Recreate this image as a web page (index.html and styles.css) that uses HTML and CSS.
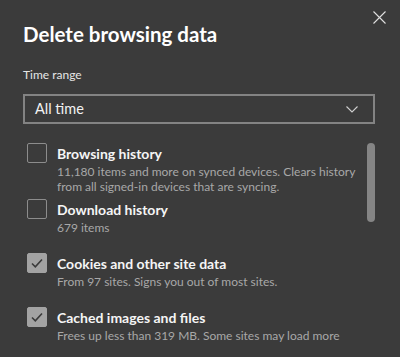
FILE: index.html
```html
<!DOCTYPE html>
<html lang="en">
<head>
    <meta charset="UTF-8">
    <meta name="viewport" content="width=device-width, initial-scale=1.0">
    <title>Delete browsing data</title>
    <link rel="stylesheet" href="styles.css">
</head>
<body>
    <div class="dialog">
        <!-- Header -->
        <div class="dialog-header">
            <h1>Delete browsing data</h1>
            <button class="close-btn" aria-label="Close">
                <svg width="13" height="13" viewBox="0 0 13 13">
                    <path d="M0.5 0.5 L12.5 12.5 M12.5 0.5 L0.5 12.5" stroke="#e0e0e0" stroke-width="1.1" fill="none"/>
                </svg>
            </button>
        </div>

        <!-- Time range -->
        <label class="field-label" for="timeRange">Time range</label>
        <div class="select-box" id="timeRange">
            <span>All time</span>
            <svg width="12" height="7" viewBox="0 0 12 7">
                <path d="M0.5 0.5 L6 6 L11.5 0.5" stroke="#d0d0d0" stroke-width="1.1" fill="none"/>
            </svg>
        </div>

        <!-- Data types -->
        <div class="option-area">
            <div class="option-list">
                <div class="option">
                    <span class="checkbox"></span>
                    <div class="option-text">
                        <div class="option-title">Browsing history</div>
                        <div class="option-desc">11,180 items and more on synced devices. Clears history from all signed-in devices that are syncing.</div>
                    </div>
                </div>
                <div class="option">
                    <span class="checkbox"></span>
                    <div class="option-text">
                        <div class="option-title">Download history</div>
                        <div class="option-desc">679 items</div>
                    </div>
                </div>
                <div class="option">
                    <span class="checkbox checked">
                        <svg width="20" height="20" viewBox="0 0 20 20">
                            <path d="M5 10.5 L8.3 13.8 L15 6.5" stroke="#3a3a3a" stroke-width="1.6" fill="none"/>
                        </svg>
                    </span>
                    <div class="option-text">
                        <div class="option-title">Cookies and other site data</div>
                        <div class="option-desc">From 97 sites. Signs you out of most sites.</div>
                    </div>
                </div>
                <div class="option">
                    <span class="checkbox checked">
                        <svg width="20" height="20" viewBox="0 0 20 20">
                            <path d="M5 10.5 L8.3 13.8 L15 6.5" stroke="#3a3a3a" stroke-width="1.6" fill="none"/>
                        </svg>
                    </span>
                    <div class="option-text">
                        <div class="option-title">Cached images and files</div>
                        <div class="option-desc">Frees up less than 319 MB. Some sites may load more</div>
                    </div>
                </div>
            </div>
            <div class="scroll-thumb"></div>
        </div>
    </div>
</body>
</html>
```

FILE: styles.css
```css
/* Dialog styles */
body {
    font-family: 'Lato', 'Noto Sans', sans-serif;
    background-color: #3b3b3b;
    margin: 0;
    padding: 0;
    color: #fff;
    height: 357px;
    overflow: hidden;
}

.dialog {
    padding: 11px 25px 0 23px;
}

.dialog-header {
    display: flex;
    justify-content: space-between;
    align-items: flex-start;
}

h1 {
    font-size: 20.5px;
    font-weight: 700;
    line-height: 28px;
    margin: 9px 0 0 0;
    color: #fff;
}

.close-btn {
    background: none;
    border: none;
    padding: 0;
    margin-right: -11px;
    width: 13px;
    height: 13px;
    display: flex;
}

.field-label {
    display: block;
    font-size: 12px;
    line-height: 16px;
    margin-top: 19px;
    color: #e6e6e6;
}

.select-box {
    margin-top: 11px;
    height: 26px;
    border: 2px solid #838383;
    display: flex;
    align-items: center;
    justify-content: space-between;
    padding: 0 15px 0 10px;
    font-size: 14.5px;
    line-height: 26px;
    color: #f2f2f2;
}

.option-area {
    display: flex;
    margin-top: 19px;
}

.option-list {
    flex: 1;
}

.option {
    display: flex;
    align-items: flex-start;
    min-height: 49px;
    padding-bottom: 5px;
}

.checkbox {
    flex: none;
    width: 18px;
    height: 18px;
    border: 1px solid #8c8c8c;
    border-radius: 2px;
    margin: 0 10px 0 4px;
    display: flex;
}

.checkbox.checked {
    background-color: #a3a3a3;
    border-color: #a3a3a3;
}

.checkbox svg {
    margin: -1px;
}

.option-title {
    font-size: 14px;
    font-weight: 700;
    line-height: 21px;
    color: #f5f5f5;
}

.option-desc {
    font-size: 12px;
    line-height: 15px;
    color: #a8a8a8;
}

.scroll-thumb {
    flex: none;
    width: 8px;
    height: 79px;
    border-radius: 4px;
    background-color: #858585;
}
```
